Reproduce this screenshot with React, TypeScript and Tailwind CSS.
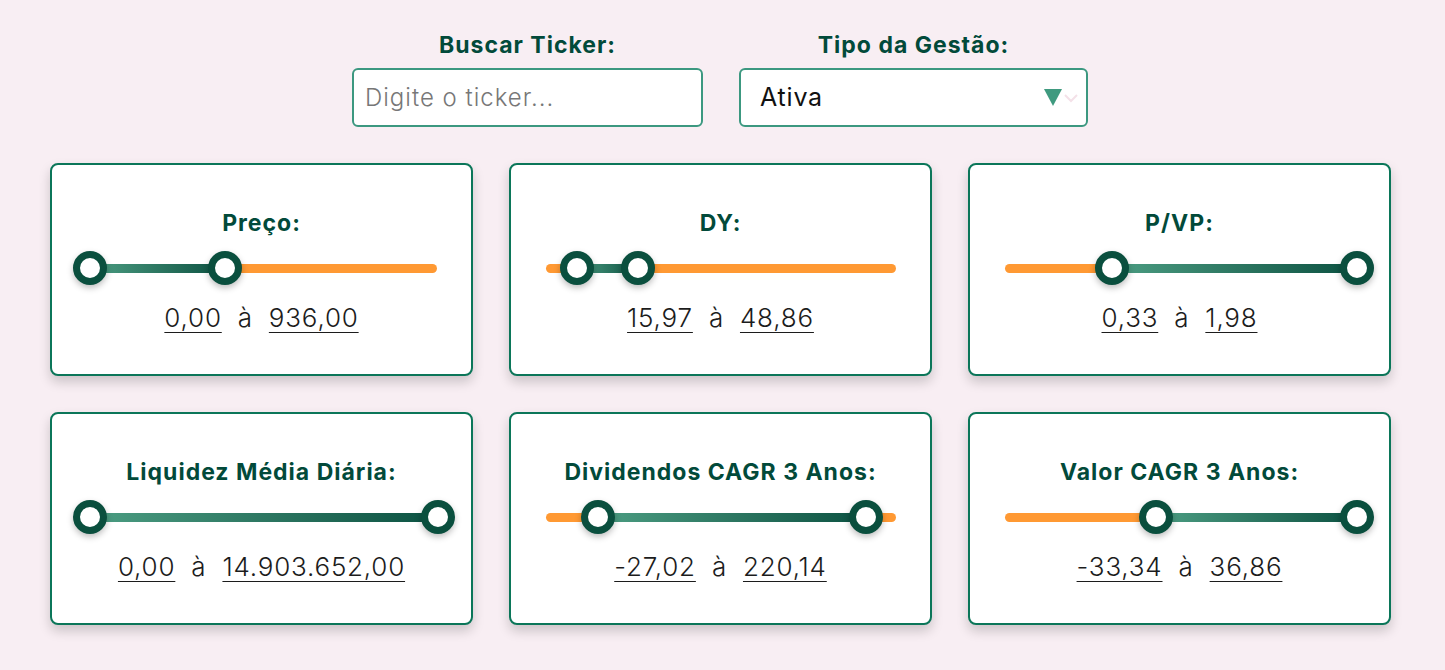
import React from 'react';

interface RangeCardProps {
  title: string;
  left: number;
  right: number;
  min: string;
  max: string;
}

// posições dos thumbs em px, relativas ao início da trilha (350px)
const filtros: RangeCardProps[] = [
  { title: 'Preço:', left: 3, right: 138, min: '0,00', max: '936,00' },
  { title: 'DY:', left: 31, right: 92, min: '15,97', max: '48,86' },
  { title: 'P/VP:', left: 107, right: 352, min: '0,33', max: '1,98' },
  { title: 'Liquidez Média Diária:', left: 3, right: 351, min: '0,00', max: '14.903.652,00' },
  { title: 'Dividendos CAGR 3 Anos:', left: 52, right: 320, min: '-27,02', max: '220,14' },
  { title: 'Valor CAGR 3 Anos:', left: 151, right: 352, min: '-33,34', max: '36,86' },
];

const Thumb = ({ x }: { x: number }) => (
  <div
    className="absolute top-0 w-[34px] h-[34px] rounded-full border-[7px] border-[#0a4f3e] bg-white shadow-[0_3px_6px_rgba(0,0,0,0.25)]"
    style={{ left: x - 17 }}
  />
);

const RangeCard = ({ title, left, right, min, max }: RangeCardProps) => (
  <div className="h-[213px] bg-white border-2 border-[#0b7659] rounded-lg shadow-[0_6px_12px_rgba(0,0,0,0.18)] flex flex-col items-center pt-[44px]">
    <h3 className="text-[23px] leading-[28px] font-bold text-[#024a3a] tracking-[1px]">{title}</h3>
    <div className="relative w-[350px] h-[34px] mt-[14px]">
      <div className="absolute left-0 right-0 top-[13px] h-[9px] rounded-full bg-[#ff9933]" />
      <div
        className="absolute top-[13px] h-[9px] bg-gradient-to-r from-[#4c9e83] to-[#0a5242]"
        style={{ left, width: right - left }}
      />
      <Thumb x={left} />
      <Thumb x={right} />
    </div>
    <div className="mt-[17px] flex items-center gap-[16px] text-[26px] leading-[32px] font-light text-[#1c1c1c] tracking-[0.8px]">
      <span className="underline underline-offset-[5px] decoration-1">{min}</span>
      <span>à</span>
      <span className="underline underline-offset-[5px] decoration-1">{max}</span>
    </div>
  </div>
);

export default function App() {
  return (
    <div className="min-h-[670px] bg-[#f8eef3] font-['Inter','Noto_Sans',sans-serif]">
      <div className="flex justify-center gap-[36px] pt-[30px] pr-[5px]">
        <div className="flex flex-col items-center">
          <label className="text-[23px] leading-[30px] font-bold text-[#024a3a] tracking-[1px]">Buscar Ticker:</label>
          <input
            placeholder="Digite o ticker..."
            className="mt-[8px] w-[351px] h-[59px] bg-white border-2 border-[#3c9880] rounded-md px-[11px] text-[24px] font-light tracking-[1px] text-[#222] placeholder:text-[#777] outline-none"
          />
        </div>
        <div className="flex flex-col items-center">
          <label className="text-[23px] leading-[30px] font-bold text-[#024a3a] tracking-[1px]">Tipo da Gestão:</label>
          <div className="mt-[8px] w-[349px] h-[59px] bg-white border-2 border-[#3c9880] rounded-md pl-[19px] pr-[8px] flex items-center justify-between">
            <span className="text-[25px] font-normal text-[#111] tracking-[0.8px]">Ativa</span>
            <div className="flex items-center">
              <svg width="18" height="17" viewBox="0 0 18 17">
                <polygon points="0,0 18,0 9,17" fill="#3f9a7f" />
              </svg>
              <svg width="14" height="10" viewBox="0 0 14 10" className="ml-[2px]">
                <polyline points="1,2 7,8 13,2" fill="none" stroke="#f4e1e8" strokeWidth="2" />
              </svg>
            </div>
          </div>
        </div>
      </div>
      <div className="ml-[50px] mt-[36px] w-[1341px] grid grid-cols-3 gap-x-[36px] gap-y-[36px]">
        {filtros.map((f) => (
          <RangeCard key={f.title} {...f} />
        ))}
      </div>
    </div>
  );
}
